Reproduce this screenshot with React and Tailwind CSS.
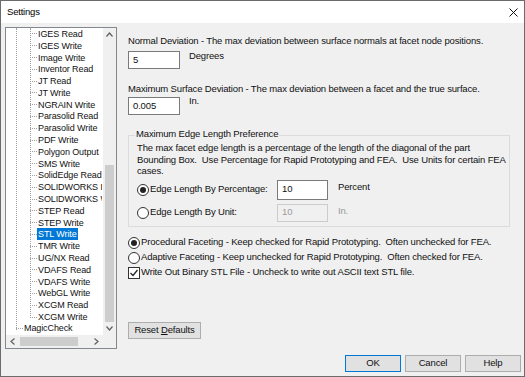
import React from 'react';

const treeItems = [
  'IGES Read', 'IGES Write', 'Image Write', 'Inventor Read', 'JT Read', 'JT Write',
  'NGRAIN Write', 'Parasolid Read', 'Parasolid Write', 'PDF Write', 'Polygon Output',
  'SMS Write', 'SolidEdge Read', 'SOLIDWORKS Read', 'SOLIDWORKS Write', 'STEP Read',
  'STEP Write', 'STL Write', 'TMR Write', 'UG/NX Read', 'VDAFS Read', 'VDAFS Write',
  'WebGL Write', 'XCGM Read', 'XCGM Write',
];

function Radio({ checked }) {
  return (
    <span className="w-[12px] h-[12px] rounded-full border border-[#333] bg-white flex items-center justify-center shrink-0">
      {checked && <span className="w-[6px] h-[6px] rounded-full bg-[#222]" />}
    </span>
  );
}

function Checkbox() {
  return (
    <span className="w-[12px] h-[12px] border border-[#333] bg-white flex items-center justify-center shrink-0">
      <svg width="10" height="10" viewBox="0 0 10 10">
        <path d="M1.5 5 L4 7.5 L8.5 2" fill="none" stroke="#222" strokeWidth="1.3" />
      </svg>
    </span>
  );
}

function Button({ children, primary, className = '' }) {
  return (
    <div className={`bg-[#e1e1e1] border flex items-center justify-center text-[#111] whitespace-nowrap ${primary ? 'border-[#0078d7]' : 'border-[#adadad]'} ${className}`}>
      {children}
    </div>
  );
}

function Tree() {
  return (
    <div className="w-[112px] h-[322px] border border-[#828790] bg-white relative overflow-hidden shrink-0 text-[9px] tracking-[-0.1px]">
      {/* guide lines */}
      <div className="absolute left-[10px] top-0 h-[302px] border-l border-dotted border-[#a0a0a0]" />
      <div className="absolute left-[24px] top-0 h-[290px] border-l border-dotted border-[#a0a0a0]" />
      <div className="w-[96px] overflow-hidden">
        {treeItems.map((name) => (
          <div key={name} className="h-[11.8px] flex items-center whitespace-nowrap">
            <span className="w-[7px] ml-[24px] border-t border-dotted border-[#a0a0a0] shrink-0" />
            <span
              className={`px-[1px] leading-[12px] ${name === 'STL Write' ? 'bg-[#0078d7] text-white' : 'text-[#111]'}`}
            >
              {name}
            </span>
          </div>
        ))}
        <div className="h-[11.8px] flex items-center whitespace-nowrap">
          <span className="w-[7px] ml-[10px] border-t border-dotted border-[#a0a0a0] shrink-0" />
          <span className="px-[1px] text-[#111]">MagicCheck</span>
        </div>
      </div>
      {/* vertical scrollbar */}
      <div className="absolute right-0 top-0 w-[13px] h-[307px] bg-[#f0f0f0] flex flex-col items-center">
        <div className="h-[13px] flex items-center justify-center">
          <svg width="7" height="5" viewBox="0 0 7 5"><path d="M0.5 4.5 L3.5 1 L6.5 4.5" fill="none" stroke="#606060" strokeWidth="1.2" /></svg>
        </div>
        <div className="w-[9px] mt-[124px] h-[158px] bg-[#cdcdcd]" />
        <div className="h-[13px] mt-auto flex items-center justify-center">
          <svg width="7" height="5" viewBox="0 0 7 5"><path d="M0.5 0.5 L3.5 4 L6.5 0.5" fill="none" stroke="#606060" strokeWidth="1.2" /></svg>
        </div>
      </div>
      {/* horizontal scrollbar */}
      <div className="absolute left-0 bottom-0 w-full h-[13px] bg-[#f0f0f0] flex items-center">
        <div className="w-[13px] flex items-center justify-center">
          <svg width="5" height="7" viewBox="0 0 5 7"><path d="M4.5 0.5 L1 3.5 L4.5 6.5" fill="none" stroke="#606060" strokeWidth="1.2" /></svg>
        </div>
        <div className="ml-[1px] w-[58px] h-[9px] bg-[#cdcdcd]" />
        <div className="w-[13px] ml-[12px] flex items-center justify-center">
          <svg width="5" height="7" viewBox="0 0 5 7"><path d="M0.5 0.5 L4 3.5 L0.5 6.5" fill="none" stroke="#606060" strokeWidth="1.2" /></svg>
        </div>
      </div>
    </div>
  );
}

export default function App() {
  return (
    <div className="w-[525px] h-[377px] border border-[#6b6b6b] bg-[#f0f0f0] flex flex-col font-['Liberation_Sans',sans-serif] text-[9.5px] tracking-[-0.15px] text-[#111] overflow-hidden">
      {/* Title bar */}
      <div className="h-[22px] bg-white flex items-center justify-between pl-[6px] pr-[6px] shrink-0">
        <span className="text-[9.5px] tracking-[-0.2px] text-black">Settings</span>
        <svg width="9" height="9" viewBox="0 0 9 9">
          <path d="M0.5 0.5 L8.5 8.5 M8.5 0.5 L0.5 8.5" stroke="#111" strokeWidth="1" />
        </svg>
      </div>

      <div className="flex pl-[4px] pt-[4px] shrink-0">
        <Tree />

        {/* Right content */}
        <div className="pl-[11px] flex flex-col">
          <div className="mt-[8px] leading-[12px] whitespace-nowrap">Normal Deviation - The max deviation between surface normals at facet node positions.</div>
          <div className="mt-[4px] flex items-start">
            <div className="w-[52px] h-[18px] border border-[#7a7a7a] bg-white pl-[4px] flex items-center">5</div>
            <span className="ml-[9px] mt-[-1px] leading-[12px]">Degrees</span>
          </div>
          <div className="mt-[14px] leading-[12px] whitespace-nowrap">Maximum Surface Deviation - The max deviation between a facet and the true surface.</div>
          <div className="mt-[2px] flex items-start">
            <div className="w-[52px] h-[18px] border border-[#7a7a7a] bg-white pl-[4px] flex items-center">0.005</div>
            <span className="ml-[9px] mt-[-2px] leading-[12px]">In.</span>
          </div>

          {/* Group box */}
          <div className="mt-[20px] w-[382px] h-[92px] border border-[#dcdcdc] relative">
            <span className="absolute left-[6px] top-[-8px] px-[1px] bg-[#f0f0f0] leading-[12px] whitespace-nowrap">Maximum Edge Length Preference</span>
            <div className="pl-[8px] pt-[6px] leading-[11.5px] whitespace-pre">
              {'The max facet edge length is a percentage of the length of the diagonal of the part\nBounding Box.  Use Percentage for Rapid Prototyping and FEA.  Use Units for certain FEA\ncases.'}
            </div>
            <div className="pl-[8px] mt-[3px] flex items-center h-[20px]">
              <Radio checked />
              <span className="pl-[1px] w-[128px] whitespace-nowrap">Edge Length By Percentage:</span>
              <div className="w-[51px] h-[20px] border border-[#7a7a7a] bg-white pl-[4px] flex items-center">10</div>
              <span className="ml-[10px] mt-[-5px]">Percent</span>
            </div>
            <div className="pl-[8px] mt-[4px] flex items-center h-[18px]">
              <Radio />
              <span className="pl-[1px] w-[128px] whitespace-nowrap">Edge Length By Unit:</span>
              <div className="w-[51px] h-[18px] border border-[#cccccc] bg-[#f0f0f0] pl-[4px] flex items-center text-[#9a9a9a]">10</div>
              <span className="ml-[10px] mt-[-3px] text-[#9a9a9a]">In.</span>
            </div>
          </div>

          <div className="mt-[8px] flex items-center h-[15px] whitespace-pre">
            <Radio checked />
            <span className="ml-[1px]">Procedural Faceting - Keep checked for Rapid Prototyping.  Often unchecked for FEA.</span>
          </div>
          <div className="flex items-center h-[15px] whitespace-pre">
            <Radio />
            <span className="ml-[1px]">Adaptive Faceting - Keep unchecked for Rapid Prototyping.  Often checked for FEA.</span>
          </div>
          <div className="flex items-center h-[15px] whitespace-pre">
            <Checkbox />
            <span className="ml-[1px]">Write Out Binary STL File - Uncheck to write out ASCII text STL file.</span>
          </div>

          <Button className="mt-[42px] w-[73px] h-[17px]">
            <span>Reset <span className="underline">D</span>efaults</span>
          </Button>
        </div>
      </div>

      <div className="flex justify-end gap-[4px] pr-[3px] mt-[6px]">
        <Button primary className="w-[56px] h-[17px]">OK</Button>
        <Button className="w-[56px] h-[17px]">Cancel</Button>
        <Button className="w-[56px] h-[17px]">Help</Button>
      </div>
    </div>
  );
}
